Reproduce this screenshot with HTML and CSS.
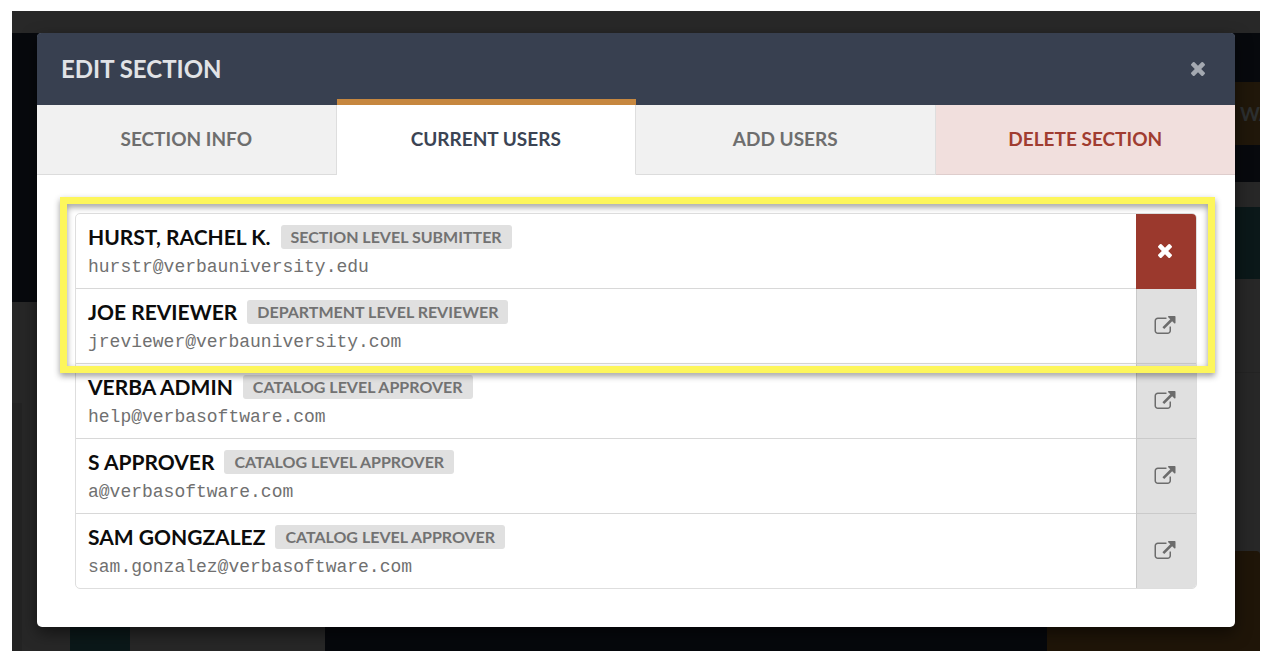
FILE: index.html
```html
<!DOCTYPE html>
<html lang="en">
<head>
<meta charset="utf-8">
<title>Edit Section</title>
<link rel="stylesheet" href="styles.css">
</head>
<body>
<svg class="sprite" aria-hidden="true">
  <symbol id="times" viewBox="110 118 1188 1188"><path d="M1298 1074q0 40-28 68l-136 136q-28 28-68 28t-68-28l-294-294-294 294q-28 28-68 28t-68-28l-136-136q-28-28-28-68t28-68l294-294-294-294q-28-28-28-68t28-68l136-136q28-28 68-28t68 28l294 294 294-294q28-28 68-28t68 28l136 136q28 28 28 68t-28 68l-294 294 294 294q28 28 28 68z"/></symbol>
  <symbol id="external" viewBox="0 0 1792 1536"><path d="M1408 928v320q0 119-84.500 203.500T1120 1536H288q-119 0-203.500-84.500T0 1248V416q0-119 84.500-203.500T288 128h704q14 0 23 9t9 23v64q0 14-9 23t-23 9H288q-66 0-113 47t-47 113v832q0 66 47 113t113 47h832q66 0 113-47t47-113V928q0-14 9-23t23-9h64q14 0 23 9t9 23zm384-864v512q0 26-19 45t-45 19-45-19l-176-176-652 652q-10 10-23 10t-23-10L695 983q-10-10-10-23t10-23l652-652-176-176q-19-19-19-45t19-45 45-19h512q26 0 45 19t19 45z"/></symbol>
</svg>
<div class="app">
  <div class="backdrop" aria-hidden="true">
    <div class="page-main">
      <div class="hero"></div>
      <div class="page-content">
        <div class="side-panel"></div>
        <div class="block-teal"></div>
        <div class="block-dark"></div>
      </div>
    </div>
    <div class="page-side">
      <div class="side-top"><div class="banner">WA</div></div>
      <div class="side-teal"></div>
      <div class="side-box"></div>
      <div class="side-amber"></div>
    </div>
  </div>
  <main class="modal" role="dialog" aria-labelledby="title">
    <header class="modal-header">
      <h1 id="title">EDIT SECTION</h1>
      <button class="close" aria-label="Close"><svg class="icon-times"><use href="#times"/></svg></button>
    </header>
    <div class="tabs" role="tablist">
      <button class="tab" role="tab">SECTION INFO</button>
      <button class="tab tab-active" role="tab" aria-selected="true">CURRENT USERS</button>
      <button class="tab" role="tab">ADD USERS</button>
      <button class="tab tab-danger" role="tab">DELETE SECTION</button>
    </div>
    <section class="modal-body">
      <div class="list-wrap">
        <ul class="users">
          <li class="user">
            <div class="info"><div class="line"><span class="name">HURST, RACHEL K.</span><span class="badge">SECTION LEVEL SUBMITTER</span></div><div class="email">hurstr@verbauniversity.edu</div></div>
            <button class="action action-remove" aria-label="Remove user"><svg class="icon-times"><use href="#times"/></svg></button>
          </li>
          <li class="user">
            <div class="info"><div class="line"><span class="name">JOE REVIEWER</span><span class="badge">DEPARTMENT LEVEL REVIEWER</span></div><div class="email">jreviewer@verbauniversity.com</div></div>
            <button class="action" aria-label="Open user"><svg class="icon-external"><use href="#external"/></svg></button>
          </li>
          <li class="user">
            <div class="info"><div class="line"><span class="name">VERBA ADMIN</span><span class="badge">CATALOG LEVEL APPROVER</span></div><div class="email">help@verbasoftware.com</div></div>
            <button class="action" aria-label="Open user"><svg class="icon-external"><use href="#external"/></svg></button>
          </li>
          <li class="user">
            <div class="info"><div class="line"><span class="name">S APPROVER</span><span class="badge">CATALOG LEVEL APPROVER</span></div><div class="email">a@verbasoftware.com</div></div>
            <button class="action" aria-label="Open user"><svg class="icon-external"><use href="#external"/></svg></button>
          </li>
          <li class="user">
            <div class="info"><div class="line"><span class="name">SAM GONGZALEZ</span><span class="badge">CATALOG LEVEL APPROVER</span></div><div class="email">sam.gonzalez@verbasoftware.com</div></div>
            <button class="action" aria-label="Open user"><svg class="icon-external"><use href="#external"/></svg></button>
          </li>
        </ul>
        <div class="highlight"></div>
      </div>
    </section>
  </main>
</div>
</body>
</html>
```
FILE: styles.css
```css
* { box-sizing: border-box; }
body { margin: 0; padding: 11px 12px 15px; background: #fff; font-family: Lato, "Open Sans", sans-serif; }
button { font: inherit; border: 0; padding: 0; margin: 0; cursor: pointer; }
svg { display: block; fill: currentColor; }
.sprite { position: absolute; width: 0; height: 0; }

.app { position: relative; overflow: hidden; padding: 22px 25px 24px; background: #282828; }

/* Dimmed page behind the dialog */
.backdrop { position: absolute; inset: 22px 0 0; display: flex; }
.page-main { flex: 1; display: flex; flex-direction: column; }
.hero { height: 269px; background: #07090d; }
.page-content { flex: 1; display: flex; background: #272727; }
.side-panel { width: 10px; margin: 101px 48px 0 0; background: #232323; }
.block-teal { width: 60px; margin-right: 195px; background: #0b1819; }
.block-dark { flex: 1; background: #06080c; }
.page-side { width: 213px; display: flex; flex-direction: column; background: #272727; }
.side-top { padding: 49px 0 37px; background: #07090d; }
.banner { height: 63px; overflow: hidden; padding-left: 193px; background: #20170a; color: #2c2f30; font-size: 19px; font-weight: 700; line-height: 63px; white-space: nowrap; }
.side-teal { height: 72px; margin-top: 25px; background: #0b1819; }
.side-box { flex: 1; margin-top: 93px; border-top: 1px solid #232323; }
.side-amber { height: 100px; border-radius: 0 4px 0 0; background: #1f1508; }

.modal { position: relative; border-radius: 5px; background: #fff; box-shadow: 0 6px 16px rgba(0, 0, 0, .5); }
.modal-header { display: flex; align-items: center; justify-content: space-between; height: 72px; padding: 0 30px 0 24px; border-radius: 4px 4px 0 0; background: #384050; }
h1 { margin: 0; color: #e1e3e6; font-size: 24px; line-height: 32px; font-weight: 700; }
.close { background: none; color: #a4a9b1; }
.icon-times { width: 14px; height: 14px; }
.icon-external { width: 22px; height: 18px; }

.tabs { display: grid; grid-template-columns: repeat(4, 1fr); }
.tab { height: 70px; padding-bottom: 2px; border-right: 1px solid #dedede; border-bottom: 1px solid #dcdcdc; background: #f1f1f1; color: #6e6e6e; font-size: 19px; font-weight: 700; }
.tab-active { position: relative; border-bottom-color: #fff; background: #fff; color: #3b4454; }
.tab-active::before { content: ""; position: absolute; inset: -6px -1px auto 0; height: 6px; background: #c6873f; }
.tab-danger { border-right: 0; border-bottom-color: #decdcc; background: #f1dfdd; color: #a03c30; }

.modal-body { padding: 38px; }
.list-wrap { position: relative; }
.users { margin: 0; padding: 0; list-style: none; border: 1px solid #dedede; border-radius: 5px; overflow: hidden; }
.user { display: flex; height: 75px; border-bottom: 1px solid #d8d8d8; }
.user:last-child { height: 74px; border-bottom: 0; }
.info { flex: 1; padding: 11px 12px; }
.line { display: flex; align-items: center; gap: 10px; height: 24px; }
.name { color: #0c0c0c; font-size: 21px; line-height: 24px; font-weight: 700; }
.badge { padding: 0 10px; border-radius: 3px; background: #e0e0e0; color: #727272; font-size: 16px; line-height: 24px; font-weight: 700; }
.email { margin-top: 6px; color: #707070; font-family: "Liberation Mono", monospace; font-size: 18px; line-height: 24px; }
.action { display: flex; align-items: center; justify-content: center; width: 60px; margin-bottom: -1px; padding: 0 4px 2px 0; border-left: 1px solid #cacaca; border-bottom: 1px solid #cacaca; background: #e0e0e0; color: #6c6c6c; }
.action-remove { padding-bottom: 0; border-color: #9b392d; background: #9b392d; color: #fff; }

/* Annotation frame round the first two users */
.highlight { position: absolute; inset: -16px -18px auto -15px; height: 176px; border: 7px solid #fdf65b; filter: drop-shadow(0 3px 3px rgba(0, 0, 0, .4)); pointer-events: none; }
```
